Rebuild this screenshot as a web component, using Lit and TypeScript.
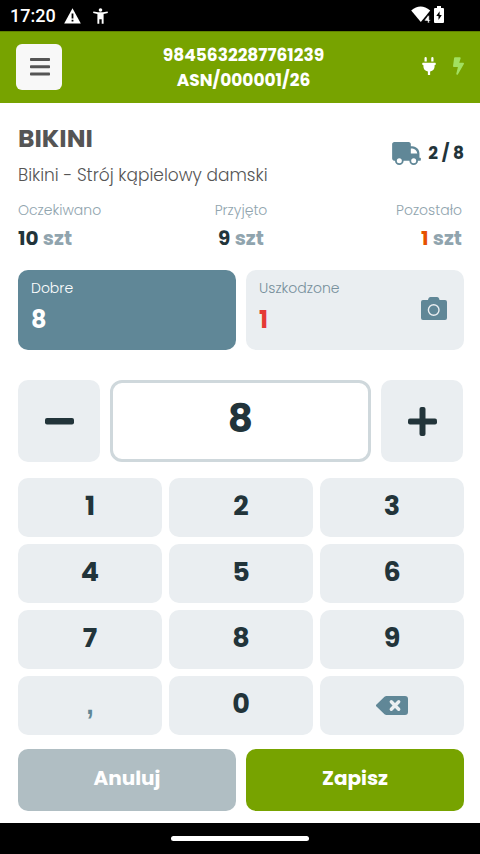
import { LitElement, html, css, svg } from "lit";
import { customElement, state } from "lit/decorators.js";
import { classMap } from "lit/directives/class-map.js";

const icon = (name: string, viewBox: string, body: unknown) =>
  html`<svg class="icon ${name}" viewBox=${viewBox} aria-hidden="true">${body}</svg>`;

const icons = {
  warning: icon("warning", "0 0 17 16", svg`<path fill="#fff" d="M8.500 .2 16.800 15.500H.2z"/><path fill="#000" d="M7.600 5.500h1.800v5.100H7.600zM7.600 11.800h1.800v1.800H7.600z"/>`),
  person: icon("person", "0 0 15 16", svg`<circle cx="7.500" cy="2" r="1.800"/><path d="M.4 3.400 5 4.200h5l4.600-.8.300 1.500-4.300 1.200v9.700H8.700v-4.600H6.300v4.600H4.400V6.100L.1 4.900z"/>`),
  wifi: icon("wifi", "0 0 20 17", svg`<path d="M.2 4.500Q9.500-3.500 19.200 4.500L15.200 9.500 12.500 12.800 9.800 16z"/><path d="M16.900 9.600 13.600 14v1h3v2h1.700v-2h1v-1.300h-1V9.600z" stroke="#000" stroke-width=".6"/>`),
  battery: icon("battery", "0 0 10 17", svg`<path d="M3 0h4v2h2a1 1 0 0 1 1 1v13a1 1 0 0 1-1 1H1a1 1 0 0 1-1-1V3a1 1 0 0 1 1-1h2z"/><path fill="#000" d="M5.600 5.200 2.300 10h2.200v4l3.300-5H5.600z"/>`),
  bars: icon("bars", "0 0 20 18", svg`<rect width="20" height="3" rx=".8"/><rect y="7.300" width="20" height="3" rx=".8"/><rect y="14.600" width="20" height="3" rx=".8"/>`),
  plug: icon("plug", "0 0 384 512", svg`<path d="M320 32a32 32 0 0 0-64 0v96h64zm48 128H16a16 16 0 0 0-16 16v32a16 16 0 0 0 16 16h16v32a160 160 0 0 0 128 156.800V512h64v-99.200A160 160 0 0 0 352 256v-32h16a16 16 0 0 0 16-16v-32a16 16 0 0 0-16-16zM128 32a32 32 0 0 0-64 0v96h64z"/>`),
  bolt: icon("bolt", "0 0 320 512", svg`<path d="M296 160H180.600l42.600-129.800C227.200 15 215.700 0 200 0H56C44 0 33.800 8.900 32.200 20.800l-32 240C-1.700 275.200 9.500 288 24 288h118.700L96.600 482.500c-3.600 15.200 8 29.500 23.300 29.500 8.400 0 16.400-4.400 20.800-12l176-304c9.300-15.900-2.200-36-20.700-36z"/>`),
  truck: icon("truck", "0 0 640 512", svg`<path fill-rule="evenodd" d="M48 0h320c26.500 0 48 21.500 48 48v48h32c100 8 160 76 160 160v96h16c9 0 16 7 16 16v32c0 9-7 16-16 16h-48c0 53-43 96-96 96s-96-43-96-96H256c0 53-43 96-96 96s-96-43-96-96H48c-26.500 0-48-21.500-48-48V48C0 21.500 21.500 0 48 0zM416 144v112h144c-8-68-54-108-112-112zM160 360a56 56 0 1 0 0 112 56 56 0 0 0 0-112zm320 0a56 56 0 1 0 0 112 56 56 0 0 0 0-112z"/>`),
  camera: icon("camera", "0 0 26 23", svg`<path fill-rule="evenodd" d="M9.500 0h6.500q2 0 2.500 3H24a2 2 0 0 1 2 2v16a2 2 0 0 1-2 2H2a2 2 0 0 1-2-2V5a2 2 0 0 1 2-2h5q.5-3 2.500-3zM12.700 7a6 6 0 1 0 0 12 6 6 0 0 0 0-12zm0 1.400a4.600 4.600 0 1 1 0 9.200 4.600 4.600 0 0 1 0-9.200z"/>`),
  minus: icon("sign", "0 0 29 29", svg`<rect y="11" width="29" height="6.500" rx="2"/>`),
  plus: icon("sign", "0 0 29 29", svg`<rect y="11.500" width="29" height="6" rx="2"/><rect x="11.500" width="6" height="29" rx="2"/>`),
  backspace: icon("backspace", "0 0 32 19", svg`<path d="M10.500 0H29a3 3 0 0 1 3 3v13a3 3 0 0 1-3 3H10.500a3 3 0 0 1-2-.8L.5 10.600a1.500 1.500 0 0 1 0-2.200L8.500.8a3 3 0 0 1 2-.8z"/><path d="m15.300 5.800 7.400 7.400m0-7.400-7.400 7.400" fill="none" stroke="#eaeef1" stroke-width="3.400" stroke-linecap="round"/>`),
};

@customElement("app-root")
export class AppRoot extends LitElement {
  @state() private counts = ["8", "1"];
  @state() private active = 0;

  static styles = css`
    :host {
      display: flex;
      flex-direction: column;
      min-height: 100vh;
      background: #fff;
      color: #22343a;
      font-family: Poppins, Inter, "Noto Sans", sans-serif;
    }
    * { box-sizing: border-box; }
    button, input { font: inherit; color: inherit; margin: 0; border: 0; }
    button { padding: 0; cursor: pointer; }
    p, h1, dl, dd { margin: 0; }
    .icon { display: block; fill: currentColor; flex: none; }

    .status {
      display: flex;
      align-items: center;
      gap: 8px;
      height: 31px;
      padding: 0 36px 0 10px;
      background: #000;
      color: #fff;
      font: 500 18px/32px Roboto, sans-serif;
    }
    .warning { width: 17px; height: 16px; }
    .person { width: 15px; height: 16px; margin-left: 4px; }
    .signals { display: flex; gap: 3px; margin-left: auto; padding-bottom: 2px; }
    .wifi { width: 20px; height: 17px; }
    .battery { width: 10px; height: 17px; }

    header {
      display: grid;
      grid-template-columns: 46px 1fr 46px;
      align-items: center;
      height: 72px;
      padding: 0 16px;
      background: #77a300;
      box-shadow: inset 0 1px #5f8200;
      color: #fff;
    }
    .menu {
      display: grid;
      place-items: center;
      width: 46px;
      height: 46px;
      padding-left: 2px;
      border-radius: 6px;
      background: #f8f8f8;
      color: #555;
    }
    .bars { width: 20px; height: 18px; }
    .document { padding: 1px 0 0 7px; font-size: 17px; line-height: 25px; font-weight: 700; text-align: center; }
    .power { display: flex; justify-content: flex-end; gap: 17px; padding-bottom: 2px; }
    .plug { width: 14px; height: 18px; }
    .bolt { width: 11px; height: 18px; color: #a2e060; }

    main { flex: 1; padding: 18px 16px 12px 18px; }
    .product { display: flex; justify-content: space-between; align-items: center; color: #555; }
    h1 { font-size: 25px; line-height: 36px; font-weight: 700; }
    .description { font-size: 17px; line-height: 36px; font-weight: 300; }
    .position { display: flex; align-items: center; gap: 7px; padding-bottom: 8px; color: #22343a; font-size: 17px; font-weight: 700; }
    .truck { width: 29px; height: 23px; color: #608797; }

    .totals { display: grid; grid-template-columns: repeat(3, 1fr); padding-top: 5px; color: #90a4ae; }
    .total { text-align: center; }
    .total:first-child { text-align: left; }
    .total:last-child { text-align: right; padding-right: 2px; }
    dt, .caption { font-size: 14px; line-height: 24px; font-weight: 300; }
    dd { font-size: 20px; line-height: 32px; font-weight: 700; }
    .amount { color: #22343a; }
    .remaining { color: #e65100; }

    .pair { display: grid; grid-template-columns: 1fr 1fr; gap: 10px; }
    .conditions { padding-top: 16px; }
    .condition {
      display: flex;
      align-items: center;
      justify-content: space-between;
      height: 80px;
      padding: 0 17px 4px 13px;
      border-radius: 10px;
      background: #eaeef1;
      color: #78909c;
      text-align: left;
    }
    .condition.selected { background: #608797; color: #fff; }
    .caption, .count { display: block; }
    .count { font-size: 24px; line-height: 40px; font-weight: 700; }
    .damaged { color: #e53935; }
    .camera { width: 26px; height: 23px; color: #608797; }

    .quantity { display: grid; grid-template-columns: 82px 1fr 82px; gap: 10px; padding: 30px 1px 16px 0; }
    .step { display: grid; place-items: center; height: 82px; border-radius: 10px; background: #eaeef1; }
    .sign { width: 29px; height: 29px; }
    .value {
      width: 100%;
      height: 82px;
      padding: 0 0 6px;
      border: 3px solid #cfd8dc;
      border-radius: 12px;
      background: #fff;
      font-size: 39px;
      font-weight: 700;
      text-align: center;
      outline: 0;
    }

    .keys { display: grid; grid-template-columns: repeat(3, 1fr); gap: 7px; }
    .key {
      display: grid;
      place-items: center;
      height: 59px;
      padding-bottom: 4px;
      border-radius: 10px;
      background: #eaeef1;
      font-size: 27px;
      font-weight: 700;
    }
    .key.muted { color: #608797; padding-bottom: 0; font-family: "Liberation Sans", Arial, sans-serif; }
    .backspace { width: 32px; height: 19px; }

    .actions { padding-top: 14px; }
    .action { height: 62px; padding-bottom: 4px; border-radius: 10px; background: #b0bec3; color: #fff; font-size: 20px; font-weight: 700; }
    .action.save { background: #77a300; }

    .gesture { display: grid; place-items: center; height: 31px; background: #000; }
    .handle { width: 138px; height: 5px; border-radius: 3px; background: #fff; }
  `;

  private setCount(value: string) {
    this.counts = this.counts.map((c, i) => (i === this.active ? value : c));
  }

  private step(delta: number) {
    const current = Number(this.counts[this.active].replace(",", ".")) || 0;
    this.setCount(String(Math.max(0, current + delta)));
  }

  private press(key: string) {
    const current = this.counts[this.active];
    if (key === "," && current.includes(",")) return;
    this.setCount(current === "0" && key !== "," ? key : current + key);
  }

  private key(label: string) {
    return html`<button class=${classMap({ key: true, muted: label === "," })} @click=${() => this.press(label)}>${label}</button>`;
  }

  render() {
    return html`
      <div class="status">
        <span>17:20</span>${icons.warning}${icons.person}
        <div class="signals">${icons.wifi}${icons.battery}</div>
      </div>
      <header>
        <button class="menu" aria-label="Menu">${icons.bars}</button>
        <div class="document"><p>9845632287761239</p><p>ASN/000001/26</p></div>
        <div class="power">${icons.plug}${icons.bolt}</div>
      </header>
      <main>
        <section class="product">
          <div><h1>BIKINI</h1><p class="description">Bikini - Strój kąpielowy damski</p></div>
          <div class="position">${icons.truck}<span>2 / 8</span></div>
        </section>
        <dl class="totals">
          <div class="total"><dt>Oczekiwano</dt><dd><span class="amount">10</span> szt</dd></div>
          <div class="total"><dt>Przyjęto</dt><dd><span class="amount">9</span> szt</dd></div>
          <div class="total"><dt>Pozostało</dt><dd><span class="remaining">1</span> szt</dd></div>
        </dl>
        <div class="pair conditions">
          <button class=${classMap({ condition: true, selected: this.active === 0 })} @click=${() => (this.active = 0)}>
            <span><span class="caption">Dobre</span><span class="count">${this.counts[0]}</span></span>
          </button>
          <button class=${classMap({ condition: true, selected: this.active === 1 })} @click=${() => (this.active = 1)}>
            <span><span class="caption">Uszkodzone</span><span class="count damaged">${this.counts[1]}</span></span>
            ${icons.camera}
          </button>
        </div>
        <div class="quantity">
          <button class="step" aria-label="Mniej" @click=${() => this.step(-1)}>${icons.minus}</button>
          <input class="value" aria-label="Ilość" inputmode="decimal" .value=${this.counts[this.active]}
            @input=${(e: Event) => this.setCount((e.target as HTMLInputElement).value)} />
          <button class="step" aria-label="Więcej" @click=${() => this.step(1)}>${icons.plus}</button>
        </div>
        <div class="keys">
          ${["1", "2", "3", "4", "5", "6", "7", "8", "9", ",", "0"].map((k) => this.key(k))}
          <button class="key muted" aria-label="Usuń" @click=${() => this.setCount(this.counts[this.active].slice(0, -1))}>${icons.backspace}</button>
        </div>
        <div class="pair actions">
          <button class="action">Anuluj</button>
          <button class="action save">Zapisz</button>
        </div>
      </main>
      <div class="gesture"><div class="handle"></div></div>
    `;
  }
}
